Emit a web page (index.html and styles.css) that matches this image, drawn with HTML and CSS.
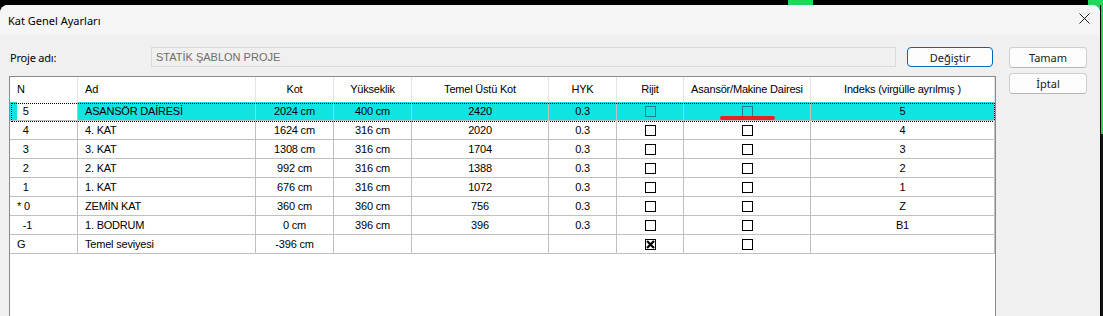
FILE: index.html
```html
<!DOCTYPE html>
<html lang="tr">
<head>
    <meta charset="UTF-8">
    <meta name="viewport" content="width=device-width, initial-scale=1.0">
    <title>Kat Genel Ayarları</title>
    <link rel="stylesheet" href="styles.css">
</head>
<body>
<div class="topbar"><span class="chip"></span><span class="edge"></span></div>
<div class="screen">
    <div class="dialog">
        <div class="titlebar">
            <span>Kat Genel Ayarları</span>
            <svg class="close" width="11" height="11" viewBox="0 0 11 11"><path d="M0.5 0.5L10.5 10.5M10.5 0.5L0.5 10.5" stroke="#1a1a1a" stroke-width="1"/></svg>
        </div>
        <div class="content">
            <div class="main">
                <div class="project">
                    <label>Proje adı:</label>
                    <div class="name">STATİK ŞABLON PROJE</div>
                    <div class="btn default">Değiştir</div>
                </div>
                <div class="grid-frame">
                    <div class="row head">
                        <div>N</div><div>Ad</div><div class="c">Kot</div><div class="c">Yükseklik</div><div class="c">Temel Üstü Kot</div><div class="c">HYK</div><div class="c">Rijit</div><div class="c">Asansör/Makine Dairesi</div><div class="c">Indeks (virgülle ayrılmış )</div>
                    </div>
                    <div class="row sel">
                        <div class="n">  5</div><div>ASANSÖR DAİRESİ</div><div class="c">2024 cm</div><div class="c">400 cm</div><div class="c">2420</div><div class="c">0.3</div><div class="cb"><span class="box"></span></div><div class="cb"><span class="box"></span></div><div class="c">5</div>
                        <span class="mark"></span>
                    </div>
                    <div class="row">
                        <div class="n">  4</div><div>4. KAT</div><div class="c">1624 cm</div><div class="c">316 cm</div><div class="c">2020</div><div class="c">0.3</div><div class="cb"><span class="box"></span></div><div class="cb"><span class="box"></span></div><div class="c">4</div>
                    </div>
                    <div class="row">
                        <div class="n">  3</div><div>3. KAT</div><div class="c">1308 cm</div><div class="c">316 cm</div><div class="c">1704</div><div class="c">0.3</div><div class="cb"><span class="box"></span></div><div class="cb"><span class="box"></span></div><div class="c">3</div>
                    </div>
                    <div class="row">
                        <div class="n">  2</div><div>2. KAT</div><div class="c">992 cm</div><div class="c">316 cm</div><div class="c">1388</div><div class="c">0.3</div><div class="cb"><span class="box"></span></div><div class="cb"><span class="box"></span></div><div class="c">2</div>
                    </div>
                    <div class="row">
                        <div class="n">  1</div><div>1. KAT</div><div class="c">676 cm</div><div class="c">316 cm</div><div class="c">1072</div><div class="c">0.3</div><div class="cb"><span class="box"></span></div><div class="cb"><span class="box"></span></div><div class="c">1</div>
                    </div>
                    <div class="row">
                        <div class="n">* 0</div><div>ZEMİN KAT</div><div class="c">360 cm</div><div class="c">360 cm</div><div class="c">756</div><div class="c">0.3</div><div class="cb"><span class="box"></span></div><div class="cb"><span class="box"></span></div><div class="c">Z</div>
                    </div>
                    <div class="row">
                        <div class="n">  -1</div><div>1. BODRUM</div><div class="c">0 cm</div><div class="c">396 cm</div><div class="c">396</div><div class="c">0.3</div><div class="cb"><span class="box"></span></div><div class="cb"><span class="box"></span></div><div class="c">B1</div>
                    </div>
                    <div class="row">
                        <div class="n">G</div><div>Temel seviyesi</div><div class="c">-396 cm</div><div class="c"></div><div class="c"></div><div class="c"></div><div class="cb"><svg width="11" height="11" viewBox="0 0 11 11"><rect x="0.5" y="0.5" width="10" height="10" fill="#fff" stroke="#000"/><path d="M2 2L9 9M9 2L2 9" stroke="#000" stroke-width="2.2"/></svg></div><div class="cb"><span class="box"></span></div><div class="c"></div>
                    </div>
                </div>
            </div>
            <div class="side">
                <div class="btn">Tamam</div>
                <div class="btn">İptal</div>
            </div>
        </div>
    </div>
    <div class="side-strip"></div>
</div>
</body>
</html>
```

FILE: styles.css
```css
*{
    box-sizing: border-box;
}
body{
    margin: 0;
    width: 1103px;
    height: 316px;
    overflow: hidden;
    background: #000;
    font-family: "Noto Sans", "Open Sans", sans-serif;
    color: #000;
}
.topbar{
    display: flex;
    height: 5px;
}
.topbar .chip{
    margin-left: 788px;
    width: 25px;
    background: #20d858;
}
.topbar .edge{
    margin-left: auto;
    width: 15px;
    background: #20d858;
}
.screen{
    display: flex;
    height: 311px;
    background: linear-gradient(to right, #000 1088px, #20d858 1088px);
}
.dialog{
    width: 1100px;
    background: #f0f0f0;
    border-radius: 8px 8px 0 0;
    overflow: hidden;
}
.side-strip{
    width: 3px;
    border-left: 1px solid #000;
    background: linear-gradient(#20d858 0 129px, #111 129px);
}
.titlebar{
    display: flex;
    align-items: center;
    justify-content: space-between;
    height: 30px;
    padding: 0 10px 0 8px;
    background: #f5f5f5;
    font-size: 11px;
}
.close{
    margin-top: -3px;
}
.content{
    display: flex;
    padding: 12px 0 0 9px;
}
.main{
    width: 987px;
}
.project{
    display: flex;
    align-items: center;
    height: 20px;
}
.project label{
    width: 141px;
    margin-left: 1px;
    font-size: 11px;
    letter-spacing: -0.2px;
}
.project .name{
    width: 745px;
    height: 20px;
    padding-left: 4px;
    border: 1px solid #dadada;
    background: #f0f0f0;
    color: #6d6d6d;
    font: 11px "Liberation Sans", Arial, sans-serif;
    line-height: 18px;
}
.btn{
    display: flex;
    align-items: center;
    justify-content: center;
    height: 20px;
    border: 1px solid #d0d0d0;
    border-bottom-color: #b5b5b5;
    border-radius: 4px;
    background: #fdfdfd;
    font-size: 11px;
    color: #1b1b1b;
}
.btn.default{
    width: 86px;
    margin-left: 11px;
    border-color: #0067c0;
}
.side{
    display: flex;
    flex-direction: column;
    gap: 5px;
    width: 78px;
    margin-left: 13px;
}
.side .btn{
    height: 21px;
}
.grid-frame{
    height: 250px;
    margin-top: 9px;
    border: 1px solid #868a91;
    border-bottom: none;
    background: #fff;
    font: 11px "Liberation Sans", Arial, sans-serif;
    letter-spacing: -0.2px;
}
.row{
    position: relative;
    display: grid;
    grid-template-columns: 68px 178px 78px 78px 137px 68px 67px 127px 184px;
    height: 19px;
}
.row > div{
    padding: 0 7px;
    border-right: 1px solid #c0c0c0;
    border-bottom: 1px solid #c0c0c0;
    line-height: 18px;
    white-space: pre;
    overflow: hidden;
}
.row.head{
    height: 25px;
}
.row.head > div{
    border-right-color: #e5e5e5;
    border-bottom: none;
    line-height: 25px;
}
.c{
    text-align: center;
}
.row > .cb{
    display: flex;
    align-items: center;
    justify-content: center;
}
.box{
    width: 11px;
    height: 11px;
    border: 1px solid #000;
    background: #fff;
}
.row.sel > div{
    background: #10e4e2;
}
.row.sel > .n{
    background: linear-gradient(to right, #10e4e2 7px, #fff 7px);
}
.row.sel .box{
    border-color: #1f8282;
    background: transparent;
}
.row.sel::after{
    content: '';
    position: absolute;
    left: 1px;
    top: 1px;
    right: 0;
    height: 17px;
    border: 1px dotted #000;
}
.mark{
    position: absolute;
    z-index: 1;
    left: 710px;
    top: 14px;
    width: 55px;
    height: 4px;
    border-radius: 2px;
    background: #e8202a;
}
```
